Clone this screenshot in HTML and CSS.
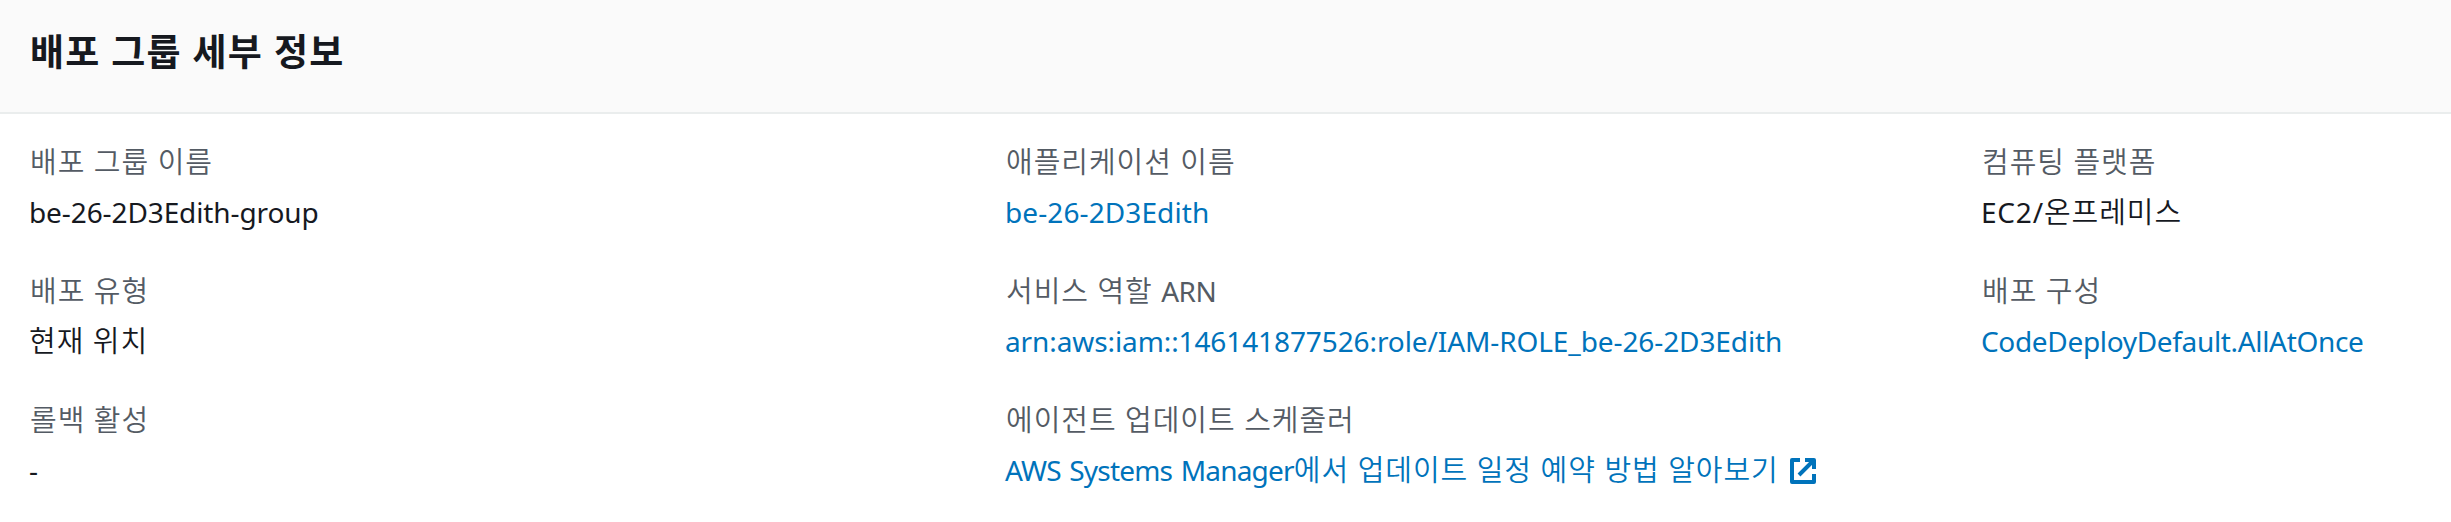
FILE: index.html
```html
<!DOCTYPE html>
<html lang="ko">
<head>
<meta charset="utf-8">
<title>배포 그룹 세부 정보</title>
<link rel="stylesheet" href="styles.css">
</head>
<body>
<section class="panel">
<header class="panel-header"><h2 class="title">배포 그룹 세부 정보</h2></header>
<div class="grid">
<dl class="field"><dt class="label ko">배포 그룹 이름</dt><dd class="value">be-26-2D3Edith-group</dd></dl>
<dl class="field"><dt class="label ko">애플리케이션 이름</dt><dd class="value"><a class="link app">be-26-2D3Edith</a></dd></dl>
<dl class="field"><dt class="label ko">컴퓨팅 플랫폼</dt><dd class="value"><span class="platform">EC2/</span><span class="ko">온프레미스</span></dd></dl>
<dl class="field"><dt class="label ko">배포 유형</dt><dd class="value"><span class="ko">현재 위치</span></dd></dl>
<dl class="field"><dt class="label ko">서비스 역할 <span class="acronym">ARN</span></dt><dd class="value"><a class="link">arn:aws:iam::146141877526:role/IAM-ROLE_be-26-2D3Edith</a></dd></dl>
<dl class="field"><dt class="label ko">배포 구성</dt><dd class="value"><a class="link config">CodeDeployDefault.AllAtOnce</a></dd></dl>
<dl class="field"><dt class="label ko">롤백 활성</dt><dd class="value">-</dd></dl>
<dl class="field"><dt class="label ko">에이전트 업데이트 스케줄러</dt><dd class="value"><a class="link"><span class="product">AWS Systems Manager</span><span class="ko">에서 업데이트 일정 예약 방법 알아보기</span><svg class="external" viewBox="0 0 26 26"><path d="M10 2H2v22h22v-8M15 2h9v9M23 3L9 17"/></svg></a></dd></dl>
</div>
</section>
</body>
</html>
```
FILE: styles.css
```css
body { margin: 0; background: #fff; color: #16191f; font-family: "Noto Sans", "Noto Sans CJK KR", sans-serif; font-size: 28px; }
.panel { height: 522px; overflow: hidden; }
.panel-header { box-sizing: border-box; height: 114px; padding: 29px 30px; background: #fafafa; border-bottom: 2px solid #eaeded; }
.title { margin: 0; font-size: 37px; line-height: 46px; font-weight: 700; letter-spacing: 1.2px; }
.grid { display: grid; grid-template-columns: 976px 976px 1fr; padding: 23px 29px; row-gap: 29px; }
.field { margin: 0; white-space: nowrap; }
.label { height: 50px; padding-left: 1px; line-height: 46px; color: #545b64; }
.value { margin: 0; height: 50px; line-height: 50px; letter-spacing: -0.1px; }
.ko { font-size: 29px; font-weight: 350; font-family: "Noto Sans CJK KR DemiLight", "Noto Sans CJK KR", sans-serif; letter-spacing: 0.95px; word-spacing: -0.5px; }
.value .ko { line-height: 1; }
.acronym { font-family: "Noto Sans", sans-serif; font-size: 28px; font-weight: 400; letter-spacing: -0.6px; line-height: 1; }
.link { color: #0073bb; }
.app { letter-spacing: 0.1px; }
.platform { letter-spacing: 0.8px; }
.config { letter-spacing: -0.33px; }
.product { letter-spacing: -0.8px; word-spacing: 2px; }
.link .ko { word-spacing: -0.5px; }
.external { width: 26px; height: 26px; margin-left: 11px; vertical-align: -3px; fill: none; stroke: #0073bb; stroke-width: 4; stroke-linejoin: round; }
```
